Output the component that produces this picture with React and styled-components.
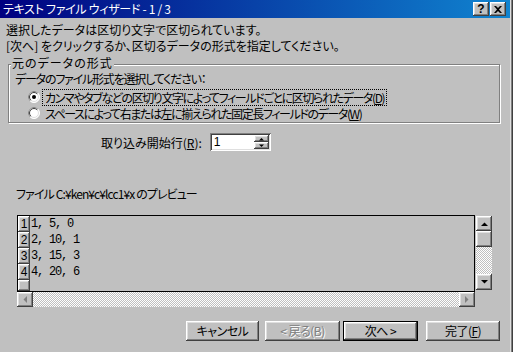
import React from 'react'
import styled, { createGlobalStyle, css } from 'styled-components'

const Global = createGlobalStyle`
  html, body { margin: 0; padding: 0; background: #c0c0c0; }
  body {
    font-family: "Noto Sans CJK JP", sans-serif;
    font-size: 12px;
    font-feature-settings: "palt";
    color: #000;
  }
  * { box-sizing: border-box; }
`

const raised = css`
  background: #c0c0c0;
  box-shadow: inset -1px -1px #404040, inset 1px 1px #fff, inset -2px -2px #808080, inset 2px 2px #dfdfdf;
`

const sunken = css`
  box-shadow: inset 1px 1px #808080, inset -1px -1px #fff, inset 2px 2px #404040, inset -2px -2px #dfdfdf;
`

const Window = styled.div`
  position: relative;
  width: 513px;
  height: 352px;
  overflow: hidden;
  background: #c0c0c0;
  box-shadow: inset -1px 0 #404040, inset -2px 0 #808080, inset -3px 0 #dfdfdf;
`

const TitleBar = styled.div`
  display: flex;
  align-items: center;
  width: 510px;
  height: 18px;
  padding-left: 3px;
  background: linear-gradient(to right, #000080, #1084d0);
  color: #fff;
  line-height: 18px;
  letter-spacing: -0.3px;
`

const TitleText = styled.div`
  flex: 1;
`

const CaptionButton = styled.div`
  ${raised};
  width: 16px;
  height: 14px;
  margin-right: ${p => p.gap}px;
  display: flex;
  align-items: center;
  justify-content: center;
  color: #000;
  font-family: "Liberation Sans", sans-serif;
  font-weight: bold;
  font-size: 12px;
  line-height: 14px;
  letter-spacing: 0;
`

const Body = styled.div`
  display: flex;
  flex-direction: column;
`

const Intro = styled.div`
  margin-top: 4px;
  padding-left: 6px;
  line-height: 16px;
`

const GroupBox = styled.div`
  position: relative;
  margin: 10px 0 0 8px;
  width: 492px;
  height: 59px;
  border: 1px solid #808080;
  box-shadow: 1px 1px 0 #fff, inset 1px 1px 0 #fff;
  padding: 6px 0 0 6px;
  display: flex;
  flex-direction: column;
`

const Legend = styled.span`
  position: absolute;
  top: -8px;
  left: 2px;
  padding: 0 1px;
  background: #c0c0c0;
  line-height: 12px;
  letter-spacing: 1px;
`

const GroupText = styled.div`
  line-height: 15px;
  letter-spacing: -1.2px;
`

const RadioRow = styled.div`
  display: flex;
  align-items: center;
  height: 16px;
  margin-left: 13px;
  margin-top: ${p => p.first ? 3 : 0}px;
`

const RadioLabel = styled.span`
  margin-left: 3px;
  padding: 0 2px;
  line-height: 15px;
  letter-spacing: -1.4px;
  outline: ${p => p.focused ? '1px dotted #000' : 'none'};
`

const U = styled.span`
  text-decoration: underline;
`

const StartRow = styled.div`
  display: flex;
  align-items: center;
  margin: 10px 0 0 101px;
`

const SpinBox = styled.div`
  ${sunken};
  background: #fff;
  width: 61px;
  height: 18px;
  margin-left: 8px;
  display: flex;
  align-items: stretch;
  padding: 2px;
`

const SpinValue = styled.div`
  flex: 1;
  padding-left: 2px;
  font-family: "Liberation Sans", sans-serif;
  font-size: 12px;
  line-height: 14px;
`

const SpinButtons = styled.div`
  width: 15px;
  display: flex;
  flex-direction: column;
`

const SpinButton = styled.div`
  ${raised};
  flex: 1;
  display: flex;
  align-items: center;
  justify-content: center;
`

const PreviewCaption = styled.div`
  margin: 35px 0 0 16px;
  line-height: 16px;
  letter-spacing: -0.9px;
`

const PreviewArea = styled.div`
  display: flex;
  margin: 13px 0 0 17px;
`

const PreviewColumn = styled.div`
  width: 458px;
  display: flex;
  flex-direction: column;
`

const Frame = styled.div`
  height: 77px;
  border: 1px solid #000;
  display: flex;
  flex-direction: column;
`

const DataRow = styled.div`
  display: flex;
  height: ${p => p.h}px;
`

const RowHead = styled.div`
  ${raised};
  width: 12px;
  display: flex;
  align-items: flex-end;
  justify-content: center;
  padding-bottom: 2px;
  font-family: "Liberation Sans", sans-serif;
  font-size: 12px;
  line-height: 12px;
`

const RowText = styled.div`
  padding-left: 1px;
  font-family: "Liberation Mono", monospace;
  font-size: 12px;
  letter-spacing: -1.2px;
  line-height: 16px;
`

const dither = css`
  background: repeating-conic-gradient(#fff 0 25%, #c0c0c0 0 50%) 0 0 / 2px 2px;
`

const HScroll = styled.div`
  ${dither};
  height: 15px;
  display: flex;
  justify-content: space-between;
`

const VScroll = styled.div`
  ${dither};
  width: 16px;
  height: 74px;
  margin: 1px 0 0 1px;
  display: flex;
  flex-direction: column;
`

const ScrollButton = styled.div`
  ${raised};
  width: ${p => p.w || 16}px;
  height: ${p => p.h || 16}px;
  display: flex;
  align-items: center;
  justify-content: center;
`

const Spacer = styled.div`
  flex: 1;
`

const Footer = styled.div`
  display: flex;
  margin: 14px 0 0 186px;
`

const Button = styled.div`
  ${raised};
  width: ${p => p.w}px;
  height: 20px;
  margin-left: ${p => p.gap}px;
  display: flex;
  align-items: center;
  justify-content: center;
  line-height: 16px;
  letter-spacing: -0.5px;
  color: ${p => p.$disabled ? '#808080' : '#000'};
  text-shadow: ${p => p.$disabled ? '1px 1px 0 #fff' : 'none'};
  ${p => p.$default && css`
    box-shadow: inset 0 0 0 1px #000, inset -2px -2px #404040, inset 2px 2px #fff, inset -3px -3px #808080, inset 3px 3px #dfdfdf;
  `}
`

const Radio = ({ checked }) => (
  <svg width="12" height="12" viewBox="0 0 12 12">
    <circle cx="6" cy="6" r="5.5" fill="#fff" stroke="#fff" />
    <path d="M2.1 9.9 A5.5 5.5 0 0 1 9.9 2.1" fill="none" stroke="#808080" />
    <circle cx="6" cy="6" r="4.5" fill="#fff" stroke="#dfdfdf" />
    <path d="M2.8 9.2 A4.5 4.5 0 0 1 9.2 2.8" fill="none" stroke="#404040" />
    {checked && <circle cx="6" cy="6" r="2" fill="#000" />}
  </svg>
)

const Arrow = ({ dir, color = '#000', size = 7 }) => {
  const pts = {
    up: '0,4 7,4 3.5,0.5',
    down: '0,0 7,0 3.5,3.5',
    left: '4,0 4,7 0.5,3.5',
    right: '0,0 0,7 3.5,3.5',
  }[dir]
  const vertical = dir === 'up' || dir === 'down'
  return (
    <svg width={vertical ? size : 4} height={vertical ? 4 : size} viewBox={vertical ? '0 0 7 4' : '0 0 4 7'}>
      <polygon points={pts} fill={color} />
    </svg>
  )
}

const Close = () => (
  <svg width="8" height="7" viewBox="0 0 8 7">
    <path d="M0 0 L2 0 L4 2 L6 0 L8 0 L5 3.5 L8 7 L6 7 L4 5 L2 7 L0 7 L3 3.5 Z" fill="#000" />
  </svg>
)

const rows = ['1, 5, 0', '2, 10, 1', '3, 15, 3', '4, 20, 6']

export default function App() {
  return (
    <Window>
      <Global />
      <TitleBar>
        <TitleText>テキスト ファイル ウィザード - 1 / 3</TitleText>
        <CaptionButton gap={1}>?</CaptionButton>
        <CaptionButton gap={4}><Close /></CaptionButton>
      </TitleBar>
      <Body>
        <Intro>
          選択したデータは区切り文字で区切られています。<br />
          [次へ] をクリックするか、区切るデータの形式を指定してください。
        </Intro>
        <GroupBox>
          <Legend>元のデータの形式</Legend>
          <GroupText>データのファイル形式を選択してください：</GroupText>
          <RadioRow first>
            <Radio checked />
            <RadioLabel focused>カンマやタブなどの区切り文字によってフィールドごとに区切られたデータ(<U>D</U>)</RadioLabel>
          </RadioRow>
          <RadioRow>
            <Radio />
            <RadioLabel>スペースによって右または左に揃えられた固定長フィールドのデータ(<U>W</U>)</RadioLabel>
          </RadioRow>
        </GroupBox>
        <StartRow>
          <span>取り込み開始行(<U>R</U>):</span>
          <SpinBox>
            <SpinValue>1</SpinValue>
            <SpinButtons>
              <SpinButton><Arrow dir="up" size={5} /></SpinButton>
              <SpinButton><Arrow dir="down" size={5} /></SpinButton>
            </SpinButtons>
          </SpinBox>
        </StartRow>
        <PreviewCaption>ファイル C:¥ken¥c¥lcc1¥x のプレビュー</PreviewCaption>
        <PreviewArea>
          <PreviewColumn>
            <Frame>
              {rows.map((r, i) => (
                <DataRow key={i} h={16}>
                  <RowHead>{i + 1}</RowHead>
                  <RowText>{r}</RowText>
                </DataRow>
              ))}
              <DataRow h={11}>
                <RowHead />
              </DataRow>
            </Frame>
            <HScroll>
              <ScrollButton h={15}><Arrow dir="left" color="#808080" /></ScrollButton>
              <ScrollButton h={15}><Arrow dir="right" color="#808080" /></ScrollButton>
            </HScroll>
          </PreviewColumn>
          <VScroll>
            <ScrollButton h={15}><Arrow dir="up" /></ScrollButton>
            <ScrollButton h={16} />
            <Spacer />
            <ScrollButton h={16}><Arrow dir="down" /></ScrollButton>
          </VScroll>
        </PreviewArea>
        <Footer>
          <Button w={73} gap={0}>キャンセル</Button>
          <Button w={75} gap={6} $disabled>&lt; 戻る(B)</Button>
          <Button w={75} gap={3} $default>次へ &gt;</Button>
          <Button w={74} gap={8}>完了(<U>F</U>)</Button>
        </Footer>
      </Body>
    </Window>
  )
}
